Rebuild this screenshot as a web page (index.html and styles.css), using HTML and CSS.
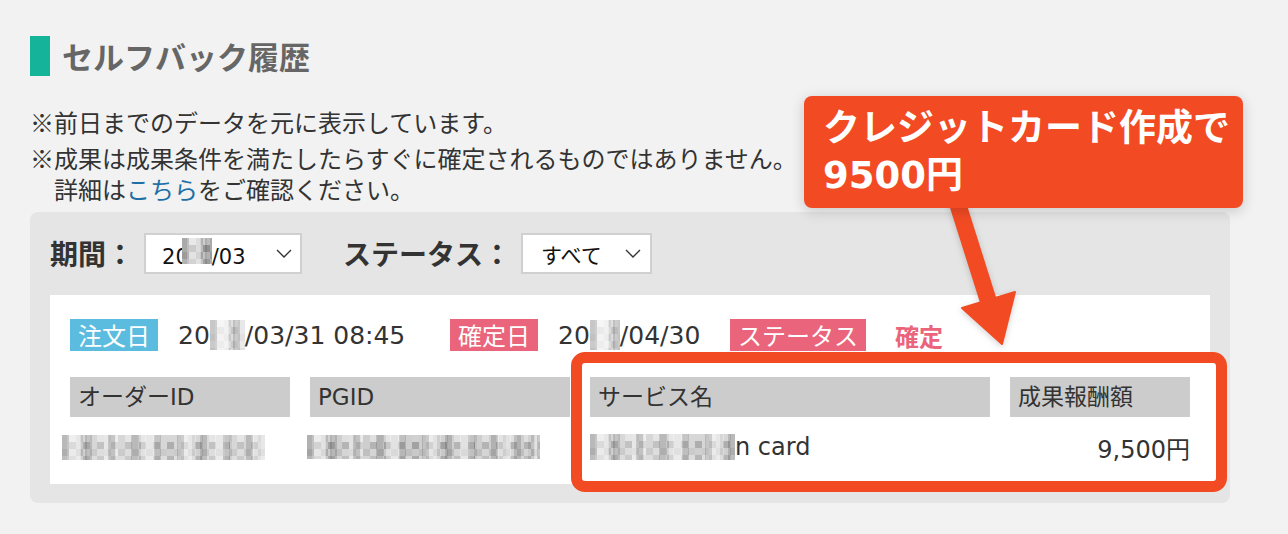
FILE: index.html
```html
<!DOCTYPE html>
<html lang="ja">
<head>
    <meta charset="UTF-8">
    <meta name="viewport" content="width=device-width, initial-scale=1.0">
    <title>セルフバック履歴</title>
    <link rel="stylesheet" href="styles.css">
</head>
<body>
    <div class="page">
        <h2 class="section-title">セルフバック履歴</h2>

        <div class="notes">
            <p>※前日までのデータを元に表示しています。</p>
            <p>※成果は成果条件を満たしたらすぐに確定されるものではありません。<br>詳細は<a href="#">こちら</a>をご確認ください。</p>
        </div>

        <section class="history">
            <div class="filters">
                <div class="filter">
                    <span class="filter-label">期間：</span>
                    <div class="select select-month">
                        <span>20<i class="mosaic mosaic-select"></i>/03</span>
                        <svg class="chevron" viewBox="0 0 16 9" width="16" height="9"><path d="M1 1l7 7 7-7" fill="none" stroke="#333" stroke-width="1.4"/></svg>
                    </div>
                </div>
                <div class="filter">
                    <span class="filter-label">ステータス：</span>
                    <div class="select select-status">
                        <span>すべて</span>
                        <svg class="chevron" viewBox="0 0 16 9" width="16" height="9"><path d="M1 1l7 7 7-7" fill="none" stroke="#333" stroke-width="1.4"/></svg>
                    </div>
                </div>
            </div>

            <div class="record">
                <div class="record-meta">
                    <div class="meta-item meta-order">
                        <span class="badge badge-blue">注文日</span>
                        <span class="meta-value">20<i class="mosaic mosaic-date"></i>/03/31 08:45</span>
                    </div>
                    <div class="meta-item meta-fixed">
                        <span class="badge badge-pink">確定日</span>
                        <span class="meta-value">20<i class="mosaic mosaic-date short"></i>/04/30</span>
                    </div>
                    <div class="meta-item">
                        <span class="badge badge-pink">ステータス</span>
                        <span class="status-text">確定</span>
                    </div>
                </div>

                <div class="record-table">
                    <div class="col-group">
                        <div class="col col-order">
                            <div class="th">オーダーID</div>
                            <div class="td"><i class="mosaic mosaic-order"></i></div>
                        </div>
                        <div class="col col-pgid">
                            <div class="th">PGID</div>
                            <div class="td"><i class="mosaic mosaic-pgid"></i></div>
                        </div>
                    </div>
                    <div class="col-group highlight">
                        <div class="col col-service">
                            <div class="th">サービス名</div>
                            <div class="td"><i class="mosaic mosaic-service"></i>n card</div>
                        </div>
                        <div class="col col-reward">
                            <div class="th">成果報酬額</div>
                            <div class="td">9,500円</div>
                        </div>
                    </div>
                </div>
            </div>
        </section>

        <!-- annotation: callout and pointer -->
        <svg class="pointer" viewBox="940 196 90 154" width="90" height="154">
            <line x1="955.8" y1="198" x2="989" y2="303" stroke="#f24b23" stroke-width="17"/>
            <polygon points="962,308 1015,292 1002,344" fill="#f24b23" stroke="#f24b23" stroke-width="2" stroke-linejoin="round"/>
        </svg>
        <div class="callout">クレジットカード作成で<br>9500円</div>
    </div>
</body>
</html>
```

FILE: styles.css
```css
body {
    margin: 0;
    background-color: #f2f2f2;
    color: #333;
    font-family: "Noto Sans CJK JP", sans-serif;
}

.page {
    position: relative;
    padding: 36px 58px 30px 30px;
}

/* heading */
.section-title {
    display: flex;
    align-items: center;
    height: 40px;
    margin: 0;
    font-size: 31px;
    line-height: 40px;
    font-weight: 700;
    color: #666;
}

.section-title::before {
    content: "";
    width: 20px;
    height: 40px;
    margin-right: 12px;
    background-color: #14b39a;
}

/* notes */
.notes {
    margin-top: 30px;
    font-size: 24px;
    line-height: 31px;
}

.notes p {
    margin: 0 0 5px;
    padding-left: 1em;
    text-indent: -1em;
}

.notes p:last-child {
    margin-bottom: 0;
}

.notes a {
    color: #1f6fa5;
    text-decoration: none;
}

/* history panel */
.history {
    margin-top: 8px;
    padding: 21px 20px 19px;
    background-color: #e5e5e5;
    border-radius: 8px;
}

.filters {
    display: flex;
    align-items: center;
}

.filter {
    display: flex;
    align-items: center;
}

.filter + .filter {
    margin-left: 41px;
}

.filter-label {
    margin-right: 10px;
    font-size: 28px;
    line-height: 41px;
    font-weight: 700;
}

.select {
    display: flex;
    align-items: center;
    justify-content: space-between;
    box-sizing: border-box;
    height: 41px;
    background-color: #fff;
    border: 2px solid #d0d0d0;
    font-family: "DejaVu Sans", "Noto Sans CJK JP", sans-serif;
    font-size: 21px;
    color: #111;
}

.select-month {
    width: 158px;
    padding: 0 8px 0 16px;
}

.select-status {
    width: 131px;
    padding: 0 9px 0 18px;
}

.chevron {
    display: block;
}

/* record card */
.record {
    margin-top: 21px;
    padding: 24px 20px 7px;
    background-color: #fff;
}

.record-meta {
    display: flex;
    align-items: center;
    height: 32px;
    font-family: "DejaVu Sans", "Noto Sans CJK JP", sans-serif;
    font-size: 25px;
}

.meta-item {
    display: flex;
    align-items: center;
}

.meta-order {
    width: 380px;
}

.meta-fixed {
    width: 280px;
}

.badge {
    height: 32px;
    padding: 0 8px;
    font-family: "Noto Sans CJK JP", sans-serif;
    font-size: 24px;
    line-height: 32px;
    color: #fff;
}

.badge-blue {
    background-color: #5bbcdf;
}

.badge-pink {
    background-color: #ea647b;
}

.meta-value {
    display: flex;
    align-items: center;
    margin-left: 20px;
}

.status-text {
    margin-left: 29px;
    font-family: "Noto Sans CJK JP", sans-serif;
    font-size: 24px;
    font-weight: 700;
    color: #ea647b;
}

.record-table {
    display: flex;
    align-items: flex-start;
    gap: 20px;
    margin-top: 26px;
    font-family: "DejaVu Sans", "Noto Sans CJK JP", sans-serif;
}

.col-group {
    display: flex;
    flex: none;
    gap: 20px;
}

.col-order { width: 220px; }
.col-pgid { width: 260px; }
.col-service { width: 400px; }
.col-reward { width: 180px; }

.th {
    height: 40px;
    padding-left: 8px;
    background-color: #ccc;
    font-size: 23px;
    line-height: 40px;
}

.td {
    display: flex;
    align-items: center;
    height: 60px;
    font-size: 24px;
}

.col-reward .td {
    justify-content: flex-end;
}

.highlight {
    margin: -25px -37px -15px -19px;
    padding: 14px 26px 4px 8px;
    border: 11px solid #f24b23;
    border-radius: 14px;
    background-color: #fff;
}

/* pixelated placeholders for hidden values */
.mosaic {
    display: inline-block;
    background-color: #c2c2c2;
    background-image:
        linear-gradient(90deg, rgba(0,0,0,.14) 0 7px, transparent 7px),
        linear-gradient(90deg, rgba(255,255,255,.4) 0 14px, transparent 14px),
        conic-gradient(rgba(255,255,255,.35) 25%, transparent 0 50%, rgba(255,255,255,.35) 0 75%, transparent 0),
        linear-gradient(90deg, transparent 0 7px, rgba(0,0,0,.1) 7px 14px, transparent 14px),
        linear-gradient(rgba(255,255,255,.35) 0 7px, transparent 7px 14px, rgba(255,255,255,.15) 14px);
    background-size: 23px 100%, 37px 100%, 14px 14px, 29px 100%, 100% 100%;
    background-position: 0 0, 5px 0, 0 0, 11px 0, 0 0;
}

.mosaic-select {
    width: 30px;
    height: 26px;
    margin-left: -7px;
    background-color: #a8a8a8;
}

.mosaic-date {
    width: 35px;
    height: 30px;
    background-color: #dcdcdc;
}

.mosaic-date.short {
    width: 30px;
}

.mosaic-order {
    width: 203px;
    height: 25px;
    margin-left: -8px;
}

.mosaic-pgid {
    width: 233px;
    height: 24px;
    margin-left: -3px;
    background-color: #b4b4b4;
}

.mosaic-service {
    width: 145px;
    height: 26px;
}

/* annotation */
.pointer {
    position: absolute;
    left: 940px;
    top: 196px;
    filter: drop-shadow(0 2px 3px rgba(0,0,0,.18));
}

.callout {
    position: absolute;
    left: 804px;
    top: 96px;
    padding: 9px 13px 9px 19px;
    background-color: #f24b23;
    border-radius: 8px;
    box-shadow: 0 3px 14px rgba(0,0,0,.18);
    font-family: "DejaVu Sans", "Noto Sans CJK JP", sans-serif;
    font-size: 37px;
    line-height: 47px;
    font-weight: 700;
    color: #fff;
    white-space: nowrap;
}
```
